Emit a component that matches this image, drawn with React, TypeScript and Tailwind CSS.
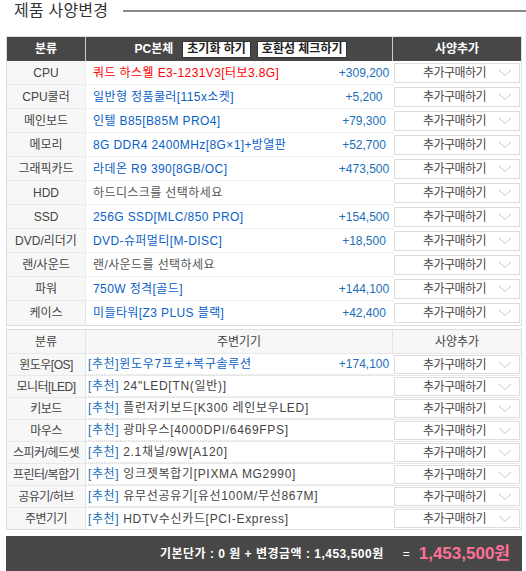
import React from 'react';

type Part = {
  label: string;
  name: string;
  price?: string;
  tone: 'red' | 'blue' | 'gray';
};

const parts: Part[] = [
  { label: 'CPU', name: '쿼드 하스웰 E3-1231V3[터보3.8G]', price: '+309,200', tone: 'red' },
  { label: 'CPU쿨러', name: '일반형 정품쿨러[115x소켓]', price: '+5,200', tone: 'blue' },
  { label: '메인보드', name: '인텔 B85[B85M PRO4]', price: '+79,300', tone: 'blue' },
  { label: '메모리', name: '8G DDR4 2400MHz[8G×1]+방열판', price: '+52,700', tone: 'blue' },
  { label: '그래픽카드', name: '라데온 R9 390[8GB/OC]', price: '+473,500', tone: 'blue' },
  { label: 'HDD', name: '하드디스크를 선택하세요', tone: 'gray' },
  { label: 'SSD', name: '256G SSD[MLC/850 PRO]', price: '+154,500', tone: 'blue' },
  { label: 'DVD/리더기', name: 'DVD-슈퍼멀티[M-DISC]', price: '+18,500', tone: 'blue' },
  { label: '랜/사운드', name: '랜/사운드를 선택하세요', tone: 'gray' },
  { label: '파워', name: '750W 정격[골드]', price: '+144,100', tone: 'blue' },
  { label: '케이스', name: '미들타워[Z3 PLUS 블랙]', price: '+42,400', tone: 'blue' },
];

type Extra = { label: string; name: string; price?: string; blue?: boolean };

const extras: Extra[] = [
  { label: '윈도우[OS]', name: '윈도우7프로+복구솔루션', price: '+174,100', blue: true },
  { label: '모니터[LED]', name: ' 24"LED[TN(일반)]' },
  { label: '키보드', name: ' 플런저키보드[K300 레인보우LED]' },
  { label: '마우스', name: ' 광마우스[4000DPI/6469FPS]' },
  { label: '스피커/헤드셋', name: ' 2.1채널/9W[A120]' },
  { label: '프린터/복합기', name: ' 잉크젯복합기[PIXMA MG2990]' },
  { label: '공유기/허브', name: ' 유무선공유기[유선100M/무선867M]' },
  { label: '주변기기', name: ' HDTV수신카드[PCI-Express]' },
];

const toneClass = {
  red: 'text-[#ff0000]',
  blue: 'text-[#0a5fc8]',
  gray: 'text-[#555555]',
};

const font = { fontFamily: '"Liberation Sans", "Noto Sans CJK KR", sans-serif' };

const Select = ({ h }: { h: string }) => (
  <div className={`mx-px flex ${h} items-center border border-[#dddddd] bg-white`}>
    <span className="flex-1 pl-[16px] text-center text-[12px] tracking-[-0.5px] text-[#444444]">추가구매하기</span>
    <svg width="14" height="8" viewBox="0 0 14 8" className="mr-[7px]" fill="none" stroke="#c4c4c4" strokeWidth="1">
      <path d="M1 1l6 5.5L13 1" />
    </svg>
  </div>
);

export default function App() {
  return (
    <div className="h-[571px] w-[526px] overflow-hidden bg-white" style={font}>
      <div className="flex h-[22px] items-center pl-[14px]">
        <h2 className="text-[16px] leading-none tracking-[0.2px] text-[#333333]">제품 사양변경</h2>
        <div className="ml-[15px] h-[2px] flex-1 bg-[#8a8a8a]" />
      </div>

      <div className="ml-[6px] mt-[14px] w-[516px] border border-[#dddddd]">
        <div className="grid h-[24px] grid-cols-[79px_307px_1fr] bg-[#474747] text-white">
          <div className="flex items-center justify-center border-r border-[#cccccc] text-[12px] font-bold">분류</div>
          <div className="flex items-center justify-center gap-[9px] border-r border-[#cccccc] pl-[4px]">
            <span className="text-[12px] font-bold">PC본체</span>
            <div className="flex gap-[6px]">
              <button className="h-[17px] border border-[#333333] bg-white px-[4px] text-[12px] font-bold leading-none text-[#222222]">초기화 하기</button>
              <button className="h-[17px] border border-[#333333] bg-white px-[4px] text-[12px] font-bold leading-none text-[#222222]">호환성 체크하기</button>
            </div>
          </div>
          <div className="flex items-center justify-center text-[12px] font-bold">사양추가</div>
        </div>
        {parts.map((p, i) => (
          <div key={p.label} className="grid h-[24px] grid-cols-[79px_307px_1fr]">
            <div className={`flex items-center justify-center border-r border-[#e3e3e3] bg-[#f7f7f7] text-[12px] text-[#444444] ${i < parts.length - 1 ? 'border-b border-b-[#dddddd] border-dotted' : ''}`}>
              {p.label}
            </div>
            <div className={`flex items-center pl-[7px] text-[12px] ${i < parts.length - 1 ? 'border-b border-dotted border-[#dddddd]' : ''}`}>
              <span className={`flex-1 tracking-[0.4px] ${toneClass[p.tone]}`}>{p.name}</span>
              <span className="w-[58px] text-center text-[12px] text-[#1b6fb8]">{p.price}</span>
            </div>
            <div className="flex flex-col justify-center">
              <Select h="h-[20px]" />
            </div>
          </div>
        ))}
      </div>

      <div className="ml-[6px] mt-[3px] w-[516px] border border-[#dddddd]">
        <div className="grid h-[23px] grid-cols-[79px_307px_1fr] bg-[#f7f7f7] text-[12px] text-[#444444]">
          <div className="flex items-center justify-center border-r border-[#e3e3e3]">분류</div>
          <div className="flex items-center justify-center border-r border-[#e3e3e3]">주변기기</div>
          <div className="flex items-center justify-center">사양추가</div>
        </div>
        {extras.map((e, i) => (
          <div key={e.label} className="grid h-[22px] grid-cols-[79px_307px_1fr] border-t border-[#e8e8e8]">
            <div className="flex items-center justify-center whitespace-nowrap border-r border-[#e3e3e3] bg-[#f7f7f7] text-[12px] tracking-[-0.5px] text-[#444444]">
              {e.label}
            </div>
            <div className={`flex items-center whitespace-pre pl-[2px] text-[12px] ${i < extras.length - 1 ? 'border-b border-dotted border-[#dddddd]' : ''}`}>
              <span className="tracking-[0.6px] text-[#1b6fb8]">[추천]</span>
              <span className={`flex-1 tracking-[0.7px] ${e.blue ? 'text-[#0a5fc8]' : 'text-[#444444]'}`}>{e.name}</span>
              <span className="w-[58px] text-center text-[#1b6fb8]">{e.price}</span>
            </div>
            <div className="flex flex-col justify-center">
              <Select h="h-[19px]" />
            </div>
          </div>
        ))}
      </div>

      <div className="ml-[6px] mt-[6px] flex h-[35px] w-[516px] items-center justify-end bg-[#474747] pr-[12px]">
        <span className="text-[12px] font-bold tracking-[0.5px] text-white">기본단가 : 0 원 + 변경금액 : 1,453,500원</span>
        <span className="ml-[19px] text-[12px] text-white">=</span>
        <span className="ml-[9px] text-[17px] font-bold text-[#ff7096]">1,453,500원</span>
      </div>
    </div>
  );
}
